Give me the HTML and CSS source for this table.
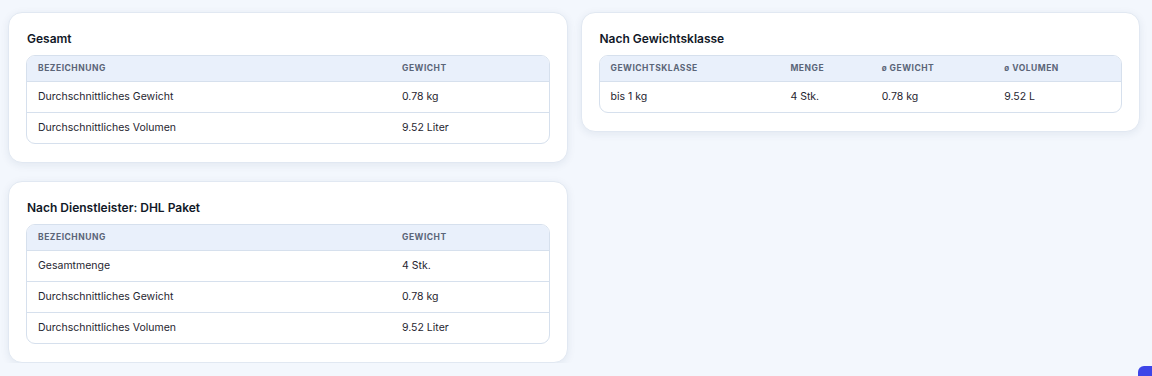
FILE: index.html
```html
<!DOCTYPE html>
<html lang="de">
<head>
<meta charset="utf-8">
<title>Statistik</title>
<link rel="stylesheet" href="styles.css">
</head>
<body>
<div class="page">
  <div class="col">
    <section class="card">
      <h2 class="card-title">Gesamt</h2>
      <div class="table-wrap">
        <table class="data">
          <thead>
            <tr><th class="c-name">Bezeichnung</th><th>Gewicht</th></tr>
          </thead>
          <tbody>
            <tr><td>Durchschnittliches Gewicht</td><td>0.78 kg</td></tr>
            <tr><td>Durchschnittliches Volumen</td><td>9.52 Liter</td></tr>
          </tbody>
        </table>
      </div>
    </section>
    <section class="card">
      <h2 class="card-title">Nach Dienstleister: DHL Paket</h2>
      <div class="table-wrap">
        <table class="data">
          <thead>
            <tr><th class="c-name">Bezeichnung</th><th>Gewicht</th></tr>
          </thead>
          <tbody>
            <tr><td>Gesamtmenge</td><td>4 Stk.</td></tr>
            <tr><td>Durchschnittliches Gewicht</td><td>0.78 kg</td></tr>
            <tr><td>Durchschnittliches Volumen</td><td>9.52 Liter</td></tr>
          </tbody>
        </table>
      </div>
    </section>
  </div>
  <div class="col">
    <section class="card">
      <h2 class="card-title">Nach Gewichtsklasse</h2>
      <div class="table-wrap">
        <table class="data">
          <thead>
            <tr>
              <th class="c-klasse">Gewichtsklasse</th>
              <th class="c-menge">Menge</th>
              <th class="c-gew"><span class="avg">ø</span> Gewicht</th>
              <th class="c-vol"><span class="avg">ø</span> Volumen</th>
            </tr>
          </thead>
          <tbody>
            <tr><td>bis 1 kg</td><td>4 Stk.</td><td>0.78 kg</td><td>9.52 L</td></tr>
          </tbody>
        </table>
      </div>
    </section>
  </div>
</div>
<div class="fab"></div>
</body>
</html>
```

FILE: styles.css
```css
* { box-sizing: border-box; }

html, body {
  margin: 0;
  padding: 0;
  background: #f3f7fd;
  font-family: Inter, "Noto Sans", "Liberation Sans", sans-serif;
  color: #1f2937;
}

.page {
  display: grid;
  grid-template-columns: 1fr 1fr;
  column-gap: 13px;
  padding: 12px 12px 0 8px;
  align-items: start;
}

.col {
  display: flex;
  flex-direction: column;
  gap: 18px;
}

.card {
  background: #ffffff;
  border: 1px solid #e1e8f2;
  border-radius: 14px;
  padding: 17px 17px 18px 17px;
  box-shadow: 0 2px 8px rgba(30, 50, 90, 0.08);
}

.card-title {
  margin: 0 0 8px 1px;
  font-size: 12px;
  line-height: 17px;
  font-weight: 600;
  color: #111827;
}

.table-wrap {
  border: 1px solid #d6e0ed;
  border-radius: 9px;
  overflow: hidden;
}

.data {
  width: 100%;
  border-collapse: collapse;
  table-layout: fixed;
}

.data th {
  background: #e9f0fb;
  text-align: left;
  font-size: 8.5px;
  font-weight: 700;
  letter-spacing: 0.06em;
  text-transform: uppercase;
  color: #5b6578;
  height: 25px;
  line-height: 12px;
  padding: 0 11px;
  vertical-align: middle;
}

.avg {
  text-transform: none;
  font-size: 8px;
}

.data td {
  font-size: 10.5px;
  color: #1f2530;
  height: 31px;
  line-height: 14px;
  padding: 0 11px;
  border-top: 1px solid #d6e0ed;
  vertical-align: middle;
}

.c-name { width: 69.8%; }

.c-klasse { width: 34.5%; }
.c-menge { width: 17.5%; }
.c-gew { width: 23.5%; }
.c-vol { width: 24.5%; }

.fab {
  position: fixed;
  right: -30px;
  bottom: -30px;
  width: 44px;
  height: 40px;
  border-radius: 6px;
  background: #3d45e8;
}
```
